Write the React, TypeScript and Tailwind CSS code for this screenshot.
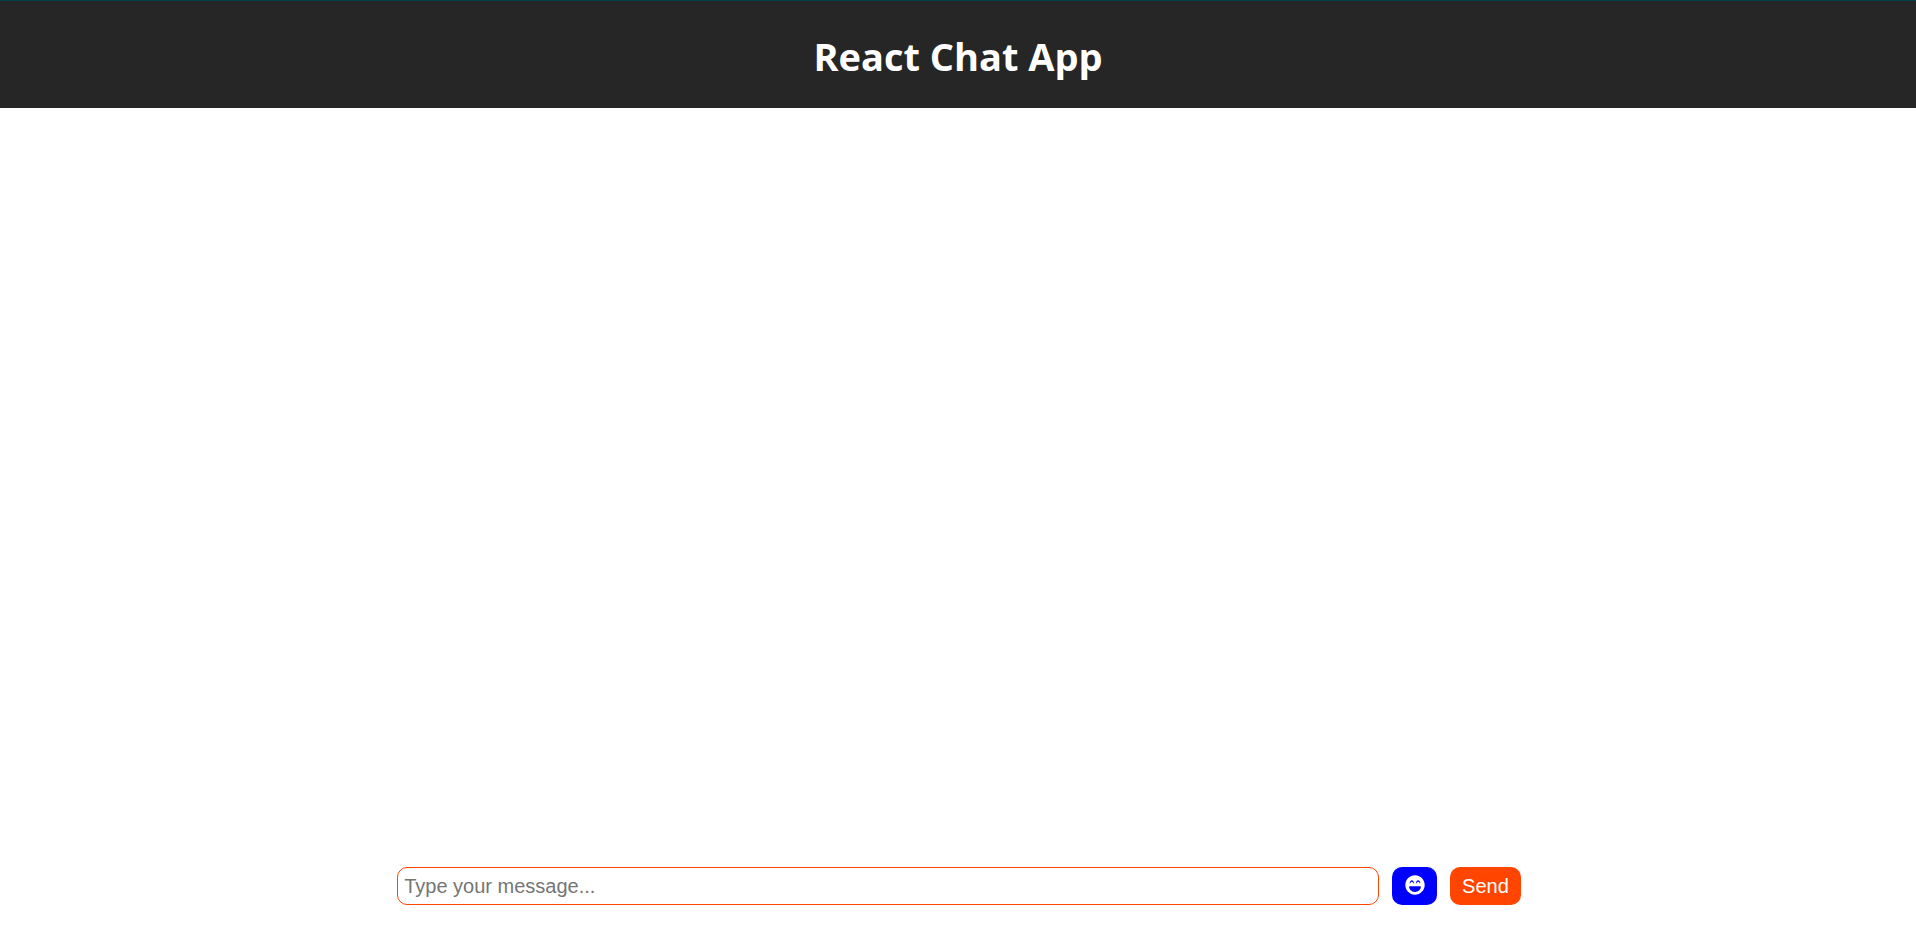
import { useState } from "react";
import { FaLaughBeam } from "react-icons/fa";

function Header() {
  return (
    <header className="flex h-27 shrink-0 items-center justify-center border-t border-[#003f4f] bg-[#262626] pt-0.5">
      <h1 className="font-['Segoe_UI','Open_Sans',sans-serif] text-[38px] leading-[52px] font-bold text-white">
        React Chat App
      </h1>
    </header>
  );
}

function MessageForm() {
  const [message, setMessage] = useState("");
  return (
    <form
      className="mx-auto mb-[46px] flex w-3/5 gap-[13px] pr-3 pl-3.5 font-['Liberation_Sans',Arial,sans-serif] text-xl leading-6"
      onSubmit={(event) => {
        event.preventDefault();
        setMessage("");
      }}
    >
      <input
        type="text"
        aria-label="Message"
        placeholder="Type your message..."
        value={message}
        onChange={(event) => setMessage(event.target.value)}
        className="h-[38px] min-w-0 flex-1 rounded-[10px] border border-[#ff4500] bg-white px-1.5 text-black outline-none placeholder:text-[#757575]"
      />
      <button
        type="button"
        aria-label="Insert emoji"
        className="flex h-[38px] w-[45px] items-start justify-center rounded-[10px] bg-[#0000ff] pt-2 text-white"
      >
        <FaLaughBeam size={20} />
      </button>
      <button type="submit" className="h-[38px] rounded-[10px] bg-[#ff4500] px-3 text-white">
        Send
      </button>
    </form>
  );
}

export default function App() {
  return (
    <div className="flex min-h-screen flex-col bg-white">
      <Header />
      <main className="flex flex-1 flex-col justify-end">
        <MessageForm />
      </main>
    </div>
  );
}
